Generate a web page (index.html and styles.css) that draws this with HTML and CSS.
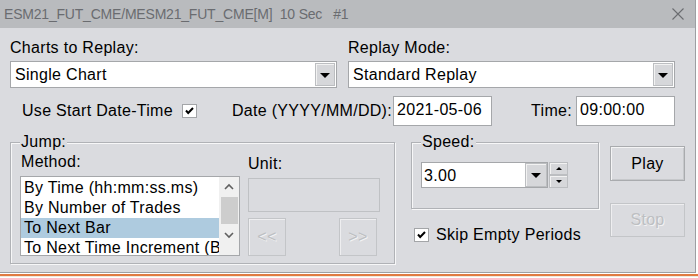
FILE: index.html
```html
<!DOCTYPE html>
<html lang="en">
<head>
    <meta charset="UTF-8">
    <title>Replay Chart</title>
    <link rel="stylesheet" href="styles.css">
</head>
<body>
    <div class="screen">
        <div class="dialog">
            <div class="titlebar">
                <span class="title">ESM21_FUT_CME/MESM21_FUT_CME[M]  10 Sec   #1</span>
                <svg class="close" width="12" height="12" viewBox="0 0 12 12">
                    <path d="M0.5 0.5 L11.5 11.5 M11.5 0.5 L0.5 11.5" stroke="#6a6c70" stroke-width="1.1" fill="none"/>
                </svg>
            </div>
            <div class="content">
                <div class="top-row">
                    <div class="field">
                        <div class="lbl">Charts to Replay:</div>
                        <div class="combo">
                            <span class="combo-text">Single Chart</span>
                            <span class="drop-btn"><i class="tri"></i></span>
                        </div>
                    </div>
                    <div class="field">
                        <div class="lbl">Replay Mode:</div>
                        <div class="combo">
                            <span class="combo-text">Standard Replay</span>
                            <span class="drop-btn"><i class="tri"></i></span>
                        </div>
                    </div>
                </div>

                <div class="date-row">
                    <span class="use-start">Use Start Date-Time</span>
                    <span class="check">
                        <svg width="13" height="12" viewBox="0 0 13 12"><path d="M3 5.5 L5.2 8 L10 3" stroke="#000" stroke-width="2" fill="none"/></svg>
                    </span>
                    <span class="date-lbl">Date (YYYY/MM/DD):</span>
                    <span class="textbox date-box">2021-05-06</span>
                    <span class="time-lbl">Time:</span>
                    <span class="textbox time-box">09:00:00</span>
                </div>

                <div class="lower">
                    <fieldset class="group jump">
                        <legend>Jump:</legend>
                        <div class="jump-grid">
                            <div class="method">
                                <div class="lbl">Method:</div>
                                <div class="listbox">
                                    <div class="items">
                                        <div class="item">By Time (hh:mm:ss.ms)</div>
                                        <div class="item">By Number of Trades</div>
                                        <div class="item selected">To Next Bar</div>
                                        <div class="item">To Next Time Increment (Bar Period)</div>
                                    </div>
                                    <div class="vscroll">
                                        <svg class="chev" width="20" height="20" viewBox="0 0 20 20"><path d="M6 12 L10 8 L14 12" stroke="#606060" stroke-width="1.6" fill="none"/></svg>
                                        <div class="thumb"></div>
                                        <svg class="chev" width="20" height="20" viewBox="0 0 20 20"><path d="M6 9 L10 13 L14 9" stroke="#606060" stroke-width="1.6" fill="none"/></svg>
                                    </div>
                                </div>
                            </div>
                            <div class="unit">
                                <div class="lbl unit-lbl">Unit:</div>
                                <div class="textbox off unit-box"></div>
                                <div class="step-btns">
                                    <button class="btn step" disabled>&lt;&lt;</button>
                                    <button class="btn step" disabled>&gt;&gt;</button>
                                </div>
                            </div>
                        </div>
                    </fieldset>

                    <div class="speed-col">
                        <fieldset class="group speed">
                            <legend>Speed:</legend>
                            <div class="speed-row">
                                <div class="combo speed-combo">
                                    <span class="combo-text">3.00</span>
                                    <span class="drop-btn"><i class="tri"></i></span>
                                </div>
                                <div class="spin">
                                    <span class="spin-btn"><i class="tri-sm up"></i></span>
                                    <span class="spin-btn"><i class="tri-sm"></i></span>
                                </div>
                            </div>
                        </fieldset>
                        <div class="skip">
                            <span class="check">
                                <svg width="13" height="12" viewBox="0 0 13 12"><path d="M3 5.5 L5.2 8 L10 3" stroke="#000" stroke-width="2" fill="none"/></svg>
                            </span>
                            <span>Skip Empty Periods</span>
                        </div>
                    </div>

                    <div class="btn-col">
                        <button class="btn play">Play</button>
                        <button class="btn stop" disabled>Stop</button>
                    </div>
                </div>
            </div>
        </div>
        <div class="chart-strip"></div>
    </div>
</body>
</html>
```

FILE: styles.css
```css
body {
    margin: 0;
    font-family: "Liberation Sans", Arial, sans-serif;
    font-size: 16px;
    letter-spacing: 0.3px;
    color: #000;
    background: #fff;
}
.screen {
    width: 698px;
    height: 278px;
    overflow: hidden;
}
.dialog {
    width: 695px;
    height: 272px;
    background: #dadbdf;
    border-right: 1px solid #9d9fa3;
    border-bottom: 1px solid #9d9fa3;
}
.chart-strip {
    height: 2px;
    margin-top: 1px;
    background: #e07a42;
    border-bottom: 1px solid #efe9dc;
}

/* title bar */
.titlebar {
    height: 28px;
    background: #b9bbbe;
    display: flex;
    align-items: center;
    padding-left: 4px;
}
.title {
    font-size: 14px;
    letter-spacing: -0.2px;
    color: #6a6c70;
    white-space: pre;
}
.close {
    margin-left: auto;
    margin-right: 11px;
}

.content {
    padding: 11px 0 0 10px;
}
.lbl {
    line-height: 18px;
}

/* combos and text boxes */
.top-row {
    display: grid;
    grid-template-columns: 327px 327px;
    column-gap: 11px;
}
.combo {
    margin-top: 4px;
    height: 27px;
    box-sizing: border-box;
    background: #fff;
    border: 1px solid #a5a7aa;
    display: flex;
    align-items: center;
}
.combo-text {
    flex: 1;
    padding-left: 4px;
    padding-top: 1px;
    white-space: nowrap;
}
.drop-btn {
    width: 20px;
    height: 23px;
    margin-right: 1px;
    box-sizing: border-box;
    background: #d6d7da;
    border: 1px solid #bcbec1;
    box-shadow: inset 1px 1px 0 #f2f2f2;
    display: flex;
    align-items: center;
    justify-content: center;
}
.tri {
    width: 0;
    height: 0;
    border-left: 5px solid transparent;
    border-right: 5px solid transparent;
    border-top: 5px solid #000;
    margin-top: 1px;
}
.textbox {
    height: 30px;
    box-sizing: border-box;
    background: #fff;
    border: 1px solid #a5a7aa;
    padding: 0 3px 2px;
    display: flex;
    align-items: center;
}
.textbox.off {
    background: #dadbdf;
    border-color: #bfc1c4;
}

/* date row */
.date-row {
    display: flex;
    align-items: center;
    height: 30px;
    margin-top: 8px;
    white-space: nowrap;
}
.use-start {
    margin-left: 12px;
    width: 160px;
}
.check {
    width: 15px;
    height: 14px;
    box-sizing: border-box;
    background: #fff;
    border: 1px solid #a3a5a8;
    display: flex;
    align-items: center;
    justify-content: center;
}
.date-lbl {
    margin-left: 32px;
    width: 163px;
    text-align: right;
}
.date-box {
    margin-left: 1px;
    width: 99px;
}
.time-lbl {
    margin-left: 39px;
    width: 41px;
    text-align: right;
}
.time-box {
    margin-left: 4px;
    width: 99px;
}

/* lower area */
.lower {
    display: flex;
    align-items: flex-start;
    margin-top: 7px;
}
.group {
    margin: 0;
    min-width: 0;
    box-sizing: border-box;
    border: 1px solid #b0b2b6;
    box-shadow: inset 1px 1px 0 #f7f7f8, 1px 1px 0 #f7f7f8;
}
.group legend {
    margin-left: 0;
    padding: 0 1px;
    line-height: 18px;
    background: #dadbdf;
}
.jump {
    width: 385px;
    height: 131px;
    padding: 2px 13px 0 9px;
}
.jump-grid {
    display: grid;
    grid-template-columns: 220px 132px;
    column-gap: 8px;
}
.method .lbl {
    padding-left: 1px;
}
.listbox {
    margin-top: 5px;
    height: 80px;
    box-sizing: border-box;
    background: #fff;
    border: 1px solid #a5a7aa;
    display: flex;
    overflow: hidden;
}
.items {
    width: 198px;
    padding-top: 1px;
    overflow: hidden;
}
.item {
    height: 20px;
    line-height: 20px;
    padding-left: 3px;
    white-space: nowrap;
    overflow: hidden;
}
.item.selected {
    background: #aecbdf;
}
.vscroll {
    width: 20px;
    background: #f0f0f0;
    display: flex;
    flex-direction: column;
    align-items: center;
}
.thumb {
    width: 17px;
    height: 27px;
    background: #cdcdcd;
}
.unit-lbl {
    margin-top: 2px;
}
.unit-box {
    margin-top: 5px;
    height: 34px;
}
.step-btns {
    display: flex;
    justify-content: space-between;
    width: 129px;
    margin-top: 6px;
}

/* buttons */
.btn {
    font-family: inherit;
    font-size: 16px;
    letter-spacing: 0.3px;
    color: #000;
    background: #dadbdf;
    border: 1px solid #a9abae;
    box-shadow: inset 1px 1px 0 #f4f4f5, inset -1px -1px 0 #c6c8cb;
    padding: 0;
}
.btn:disabled {
    color: #bdbfc2;
    border-color: #c3c5c8;
    text-shadow: 1px 1px 0 #f2f2f3;
    box-shadow: inset 1px 1px 0 #eeeef0;
}
.step {
    width: 38px;
    height: 38px;
}
.btn-col {
    width: 75px;
    margin-left: 11px;
    display: flex;
    flex-direction: column;
}
.play {
    margin-top: 13px;
    height: 35px;
}
.stop {
    margin-top: 22px;
    height: 34px;
}

/* speed */
.speed-col {
    width: 188px;
    margin-left: 16px;
}
.speed {
    height: 76px;
    padding: 11px 0 0 9px;
}
.speed-row {
    display: flex;
    align-items: stretch;
}
.speed-combo {
    margin-top: 0;
    width: 127px;
    height: 26px;
}
.speed-combo .combo-text {
    padding-left: 2px;
}
.speed-combo .drop-btn {
    width: 22px;
    height: 24px;
    margin-right: 0;
}
.spin {
    margin-left: 1px;
    width: 19px;
    display: flex;
    flex-direction: column;
}
.spin-btn {
    flex: 1;
    background: #d6d7da;
    border: 1px solid #bcbec1;
    box-shadow: inset 1px 1px 0 #f2f2f2;
    display: flex;
    align-items: center;
    justify-content: center;
}
.tri-sm {
    width: 0;
    height: 0;
    border-left: 3px solid transparent;
    border-right: 3px solid transparent;
    border-top: 3px solid #000;
}
.tri-sm.up {
    border-top: 0;
    border-bottom: 3px solid #000;
}
.skip {
    display: flex;
    align-items: center;
    gap: 7px;
    margin-top: 17px;
    margin-left: 3px;
}
```
